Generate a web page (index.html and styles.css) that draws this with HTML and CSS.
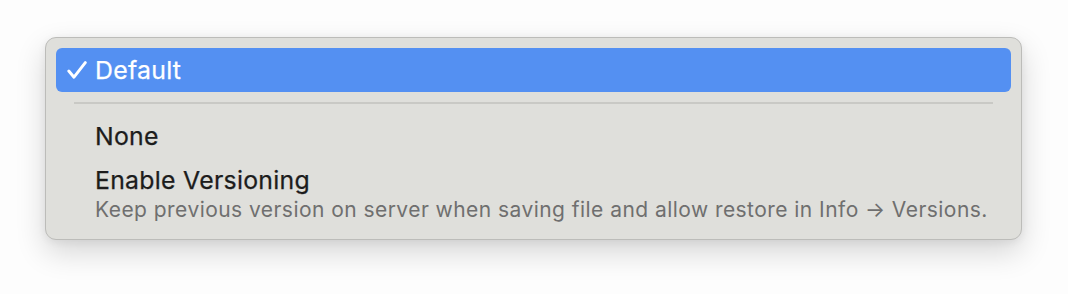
FILE: index.html
```html
<!DOCTYPE html>
<html>
<head>
<meta charset="utf-8">
<link rel="stylesheet" href="styles.css">
</head>
<body>
<div class="menu">
  <div class="item selected">
    <span class="check"><svg width="20" height="18" viewBox="0 0 20 18"><path d="M1.8 10 L7 16.2 L18.3 1.6" fill="none" stroke="#fff" stroke-width="2.9" stroke-linecap="round" stroke-linejoin="round"/></svg></span>
    <span class="label">Default</span>
  </div>
  <div class="sep"></div>
  <div class="item">
    <span class="check"></span>
    <span class="label">None</span>
  </div>
  <div class="item multi">
    <span class="check"></span>
    <div class="texts">
      <span class="label">Enable Versioning</span>
      <span class="sub">Keep previous version on server when saving file and allow restore in Info → Versions.</span>
    </div>
  </div>
</div>
</body>
</html>
```
FILE: styles.css
```css
html {
  margin: 0;
  padding: 0;
  height: 100%;
  background: #fdfdfd;
}
body {
  margin: 0;
  height: 100%;
  box-sizing: border-box;
  font-family: Inter, "Noto Sans", sans-serif;
  padding: 37px 0 0 45px;
}
.menu {
  width: 955px;
  height: 181px;
  padding: 10px;
  background: #dfdfdb;
  border: 1px solid #bcbcb9;
  border-radius: 11px;
  box-shadow: 0 12px 30px rgba(0, 0, 0, 0.16), 0 2px 8px rgba(0, 0, 0, 0.06);
}
.item {
  display: flex;
  align-items: flex-start;
  height: 44px;
  padding-left: 11px;
  border-radius: 6px;
  color: #1c1c1c;
}
.item.selected {
  background: #5490f2;
  color: #fff;
}
.check {
  width: 28px;
  flex: none;
  display: flex;
  padding-top: 13px;
}
.label {
  font-size: 24.8px;
  font-weight: 400;
  letter-spacing: 0.28px;
  line-height: 44px;
  -webkit-text-stroke: 0.25px currentColor;
}
.sep {
  height: 2px;
  margin: 10px 18px 10px 18px;
  background: #c9c9c5;
}
.item.multi {
  height: auto;
}
.texts {
  display: flex;
  flex-direction: column;
}
.texts .label {
  line-height: 44px;
}
.sub {
  font-size: 21px;
  line-height: 26px;
  letter-spacing: 0.45px;
  color: #6f6f6f;
  margin-top: -5px;
}
```
